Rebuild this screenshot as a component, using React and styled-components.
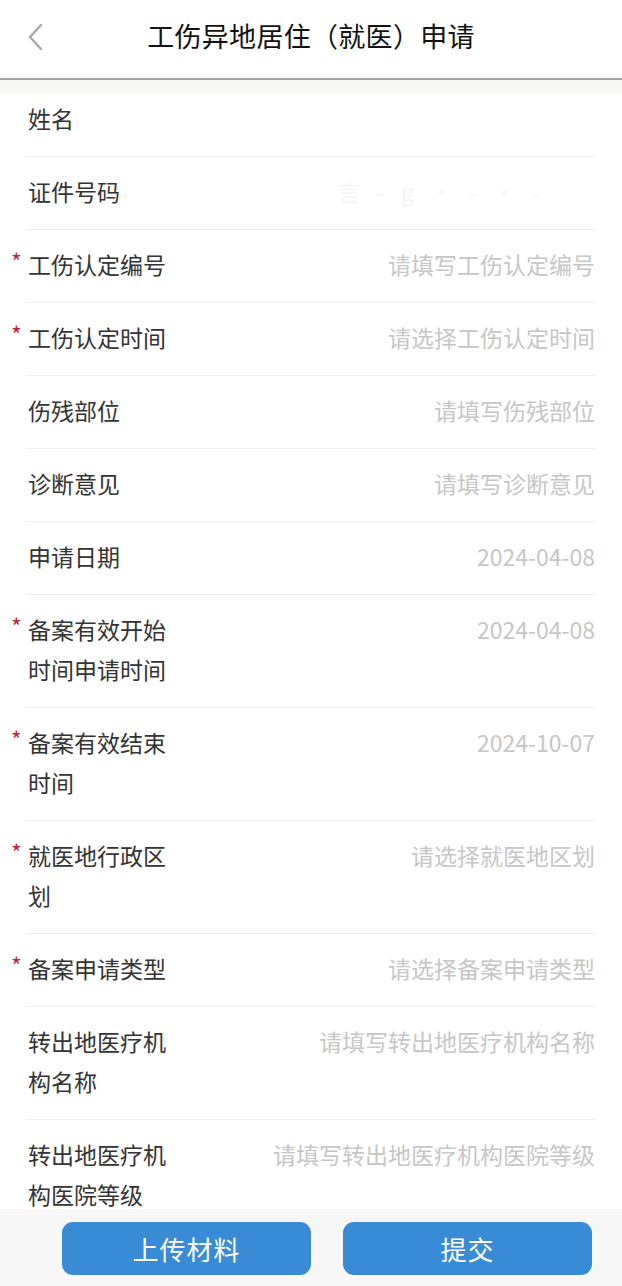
import React from "react";
import styled, { createGlobalStyle } from "styled-components";

const Global = createGlobalStyle`
  html, body { margin: 0; padding: 0; background: #ffffff; }
  body { font-family: "Noto Sans CJK SC", "Noto Sans", sans-serif; overflow: hidden; }
  * { box-sizing: border-box; }
`;

const Page = styled.div`
  width: 622px;
  min-height: 1286px;
  background: #ffffff;
`;

const Header = styled.header`
  height: 80px;
  display: flex;
  align-items: center;
  justify-content: center;
  position: relative;
  background: #ffffff;
  border-bottom: 2px solid #a3a3a3;
  padding-bottom: 8px;
`;

const BackButton = styled.button`
  position: absolute;
  left: 22px;
  top: 19px;
  width: 28px;
  height: 36px;
  border: none;
  background: transparent;
  padding: 0;
  display: flex;
  align-items: center;
  justify-content: center;
`;

const Title = styled.h1`
  margin: 0;
  font-size: 27px;
  font-weight: 400;
  color: #111111;
  letter-spacing: 0.3px;
`;

const Band = styled.div`
  height: 13px;
  background: #f7f7f5;
`;

const Form = styled.div`
  display: flex;
  flex-direction: column;
  padding: 0 26px 80px;
`;

const Row = styled.div`
  display: flex;
  align-items: flex-start;
  justify-content: space-between;
  padding: ${(p) => (p.$first ? "5px" : "14px")} 0 18px;
  border-bottom: 1px solid ${(p) => (p.$last ? "transparent" : "#efefef")};
`;

const Label = styled.div`
  position: relative;
  width: 140px;
  flex-shrink: 0;
  padding-left: 2px;
  font-size: 23px;
  line-height: 40px;
  color: #333333;
`;

const Star = styled.span`
  position: absolute;
  left: -15px;
  top: -3px;
  font-size: 23px;
  line-height: 40px;
  color: #c3243a;
`;

const Value = styled.div`
  flex: 1;
  text-align: right;
  font-size: 23px;
  line-height: 40px;
  color: ${(p) => (p.$blur ? "#f4f4f4" : "#c6c6c6")};
  white-space: nowrap;
  letter-spacing: ${(p) => (p.$blur ? "16px" : "0")};
  padding-right: ${(p) => (p.$blur ? "40px" : "1px")};
`;

const Footer = styled.footer`
  position: fixed;
  left: 0;
  right: 0;
  bottom: 0;
  height: 77px;
  background: #f7f7f7;
  display: flex;
  justify-content: flex-start;
  gap: 32px;
  padding: 13px 0 0 62px;
`;

const ActionButton = styled.button`
  width: 249px;
  height: 53px;
  border: none;
  border-radius: 11px;
  background: #3a8bd6;
  color: #ffffff;
  font-family: "Noto Sans CJK SC", "Noto Sans", sans-serif;
  font-size: 26px;
  letter-spacing: 1px;
`;

const rows = [
  { label: "姓名", value: "" },
  { label: "证件号码", value: "言-g·-·-", blur: true },
  { label: "工伤认定编号", value: "请填写工伤认定编号", req: true },
  { label: "工伤认定时间", value: "请选择工伤认定时间", req: true },
  { label: "伤残部位", value: "请填写伤残部位" },
  { label: "诊断意见", value: "请填写诊断意见" },
  { label: "申请日期", value: "2024-04-08" },
  { label: "备案有效开始时间申请时间", value: "2024-04-08", req: true },
  { label: "备案有效结束时间", value: "2024-10-07", req: true },
  { label: "就医地行政区划", value: "请选择就医地区划", req: true },
  { label: "备案申请类型", value: "请选择备案申请类型", req: true },
  { label: "转出地医疗机构名称", value: "请填写转出地医疗机构名称" },
  { label: "转出地医疗机构医院等级", value: "请填写转出地医疗机构医院等级" },
];

export default function App() {
  return (
    <Page>
      <Global />
      <Header>
        <BackButton aria-label="返回">
          <svg width="20" height="28" viewBox="0 0 20 28">
            <polyline
              points="15,2 4,14 15,26"
              fill="none"
              stroke="#a8a8a8"
              strokeWidth="2.4"
              strokeLinecap="round"
              strokeLinejoin="round"
            />
          </svg>
        </BackButton>
        <Title>工伤异地居住（就医）申请</Title>
      </Header>
      <Band />
      <Form>
        {rows.map((r, i) => (
          <Row key={r.label} $first={i === 0} $last={i === rows.length - 1}>
            <Label>
              {r.req && <Star>*</Star>}
              {r.label}
            </Label>
            <Value $blur={r.blur}>{r.value}</Value>
          </Row>
        ))}
      </Form>
      <Footer>
        <ActionButton>上传材料</ActionButton>
        <ActionButton>提交</ActionButton>
      </Footer>
    </Page>
  );
}
